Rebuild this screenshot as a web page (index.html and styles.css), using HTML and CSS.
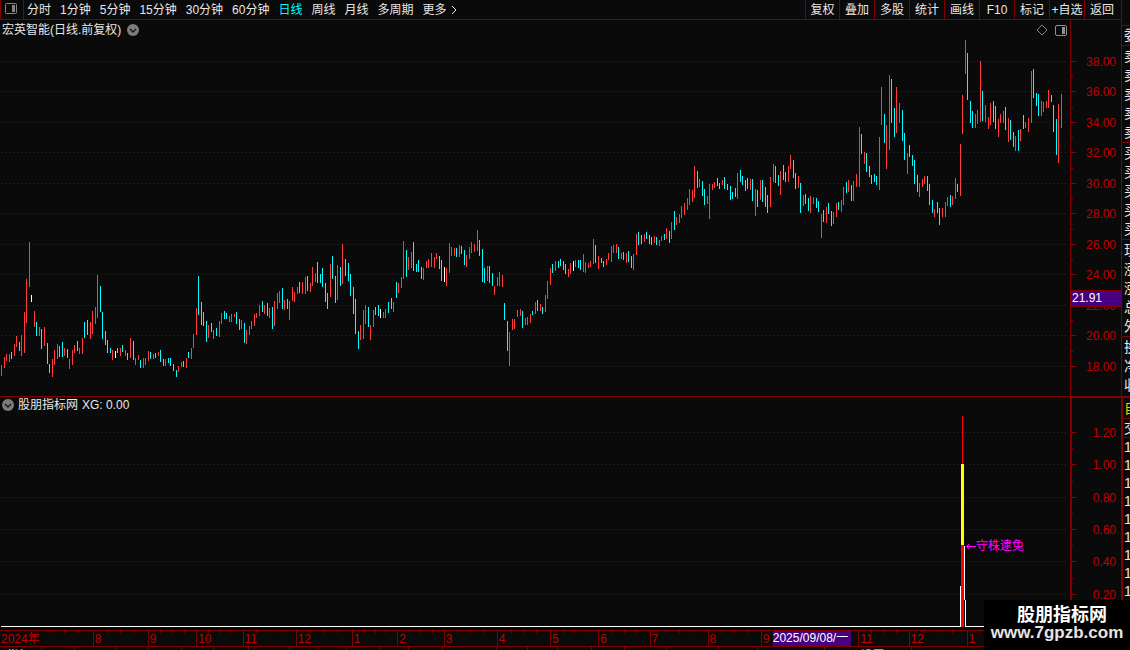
FILE: index.html
```
<!DOCTYPE html>
<html lang="zh-CN">
<head>
<meta charset="utf-8">
<title>宏英智能 日线</title>
<link rel="stylesheet" href="styles.css">
</head>
<body>
<div class="app">
  <div class="main">
    <header class="toolbar">
      <button class="layout-btn" aria-label="布局">
        <svg width="13" height="12" viewBox="0 0 13 12"><rect x=".5" y=".5" width="11" height="10" rx="1" fill="none" stroke="#858585"/><rect x="7" y="2" width="3" height="7" fill="#858585"/></svg>
      </button>
      <nav class="periods">
        <button>分时</button><button>1分钟</button><button>5分钟</button><button>15分钟</button><button>30分钟</button><button>60分钟</button><button class="active">日线</button><button>周线</button><button>月线</button><button>多周期</button><button class="more">更多<svg width="6" height="10" viewBox="0 0 6 10"><path d="M1 1L5 5L1 9" fill="none" stroke="#e8e8e8"/></svg></button>
      </nav>
      <nav class="tools">
        <button>复权</button><button>叠加</button><button>多股</button><button>统计</button><button>画线</button><button>F10</button><button>标记</button><button>+自选</button><button>返回</button>
      </nav>
    </header>

    <section class="panel price">
      <div class="plot">
        <div class="caption">
          <h1>宏英智能(日线.前复权)</h1>
          <svg class="round" width="12" height="12" viewBox="0 0 12 12"><circle cx="6" cy="6" r="6" fill="#7c7c7c"/><path d="M3 5L6 8L9 5" fill="none" stroke="#151515" stroke-width="1.4"/></svg>
        </div>
        <div class="corner">
          <svg width="12" height="12" viewBox="0 0 12 12"><path d="M6 1L11 6L6 11L1 6Z" fill="none" stroke="#808080"/></svg>
          <svg width="12" height="11" viewBox="0 0 12 11"><rect x=".5" y=".5" width="11" height="10" rx="1.5" fill="none" stroke="#909090"/><rect x="7" y="2" width="3" height="7" fill="#909090"/></svg>
        </div>
        <svg class="canvas price-canvas" viewBox="0 20 1070 376" preserveAspectRatio="none">
          <path class="grid" d="M1 61.5H1069M1 91.5H1069M1 122.5H1069M1 152.5H1069M1 183.5H1069M1 213.5H1069M1 244.5H1069M1 274.5H1069M1 305.5H1069M1 335.5H1069M1 366.5H1069"/>
          <path id="up" class="up"/>
          <path id="down" class="down"/>
          <path id="flat" class="flat"/>
        </svg>
      </div>
      <div class="axis">
        <svg width="50" height="376" viewBox="0 20 50 376">
          <path class="ticks" d="M0 61.5H5M0 91.5H5M0 122.5H5M0 152.5H5M0 183.5H5M0 213.5H5M0 244.5H5M0 274.5H5M0 305.5H5M0 335.5H5M0 366.5H5M0 76.5H2M0 107.5H2M0 137.5H2M0 168.5H2M0 198.5H2M0 229.5H2M0 259.5H2M0 290.5H2M0 320.5H2M0 351.5H2"/>
          <g class="labels"><text x="45" y="66">38.00</text><text x="45" y="96">36.00</text><text x="45" y="127">34.00</text><text x="45" y="157">32.00</text><text x="45" y="188">30.00</text><text x="45" y="218">28.00</text><text x="45" y="249">26.00</text><text x="45" y="279">24.00</text><text x="45" y="310">22.00</text><text x="45" y="340">20.00</text><text x="45" y="371">18.00</text></g>
        </svg>
        <output class="price-tag">21.91</output>
      </div>
    </section>

    <section class="panel indicator">
      <div class="plot">
        <div class="caption">
          <svg class="round" width="12" height="12" viewBox="0 0 12 12"><circle cx="6" cy="6" r="6" fill="#7c7c7c"/><path d="M3 5L6 8L9 5" fill="none" stroke="#151515" stroke-width="1.4"/></svg>
          <h2>股朋指标网</h2><span>XG: 0.00</span>
        </div>
        <svg class="canvas indicator-canvas" viewBox="0 397 1070 233" preserveAspectRatio="none">
          <path class="grid" d="M1 432.5H1069M1 464.5H1069M1 497.5H1069M1 529.5H1069M1 561.5H1069M1 594.5H1069"/>
          <path class="signal" d="M1 626.5H960.5V586M964.5 546V600M965.5 600V626.5H1069"/>
          <path fill="#f00" d="M962 416h1v48h-1zM961 545h3v82h-3z"/>
          <path fill="#ff0" d="M961 464h3v81h-3z"/>
          <path d="M966.5 546.5H976M969 544L966.5 546.5L969 549" fill="none" stroke="#f0f"/>
          <text class="note" x="976" y="550">守株逮兔</text>
        </svg>
      </div>
      <div class="axis">
        <svg width="49" height="233" viewBox="0 397 49 233">
          <path class="ticks" d="M0 432.5H4M0 464.5H4M0 497.5H4M0 529.5H4M0 561.5H4M0 594.5H4M0 448.5H1M0 481.5H1M0 513.5H1M0 545.5H1M0 578.5H1"/>
          <g class="labels"><text x="44" y="437">1.20</text><text x="44" y="469">1.00</text><text x="44" y="502">0.80</text><text x="44" y="534">0.60</text><text x="44" y="566">0.40</text><text x="44" y="599">0.20</text></g>
        </svg>
      </div>
    </section>

    <div class="timeline">
      <ol class="months">
        <li class="first" style="flex-grow:37">2024年</li><li class="plain" style="flex-grow:57"></li><li style="flex-grow:55">8</li><li style="flex-grow:48">9</li><li style="flex-grow:46">10</li><li style="flex-grow:53">11</li><li style="flex-grow:56">12</li><li style="flex-grow:45">1</li><li style="flex-grow:46">2</li><li style="flex-grow:53">3</li><li style="flex-grow:53">4</li><li style="flex-grow:48">5</li><li style="flex-grow:51">6</li><li style="flex-grow:58">7</li><li style="flex-grow:53">8</li><li class="cursor-month" style="flex-grow:99">9<span class="date-tag">2025/09/08/一</span></li><li style="flex-grow:50">11</li><li style="flex-grow:58">12</li><li style="flex-grow:52">1</li><li class="plain" style="flex-grow:52"></li>
      </ol>
    </div>

    <footer class="tabs">
      <span style="flex-grow:42">指标</span><span style="flex-grow:31"></span><span style="flex-grow:42"></span><span style="flex-grow:29"></span><span style="flex-grow:33"></span><span style="flex-grow:30"></span><span style="flex-grow:34"></span><span style="flex-grow:41"></span><span style="flex-grow:26"></span><span style="flex-grow:24"></span><span style="flex-grow:32"></span><span style="flex-grow:26"></span><span style="flex-grow:32"></span><span style="flex-grow:58"></span><span style="flex-grow:28"></span><span style="flex-grow:28"></span><span style="flex-grow:32"></span><span style="flex-grow:31"></span><span style="flex-grow:42"></span><span style="flex-grow:55"></span><span style="flex-grow:39"></span><span style="flex-grow:73"></span><span class="picked" style="flex-grow:63">设置</span><span style="flex-grow:250"></span>
    </footer>
  </div>

  <aside class="quote">
    <div class="gap"></div>
    <ul class="one"><li>委</li></ul>
    <ul class="five"><li>卖</li><li>卖</li><li>卖</li><li>卖</li><li>卖</li></ul>
    <ul class="five"><li>买</li><li>买</li><li>买</li><li>买</li><li>买</li></ul>
    <ul class="five"><li>现</li><li>涨</li><li>涨</li><li>总</li><li>外</li></ul>
    <ul class="three"><li>换</li><li>净</li><li>收</li></ul>
    <ul class="own"><li>自</li></ul>
    <ul class="deal"><li>交</li></ul>
    <ul class="trades"><li>1</li><li>1</li><li>1</li><li>1</li><li>1</li><li>1</li><li>1</li><li>1</li><li>1</li></ul>
  </aside>
</div>

<div class="brand"><strong>股朋指标网</strong><span>www.7gpzb.com</span></div>
<script src="chart.js"></script>
</body>
</html>
```
FILE: styles.css
```
* { box-sizing: border-box; }
body, h1, h2, ol, ul { margin: 0; padding: 0; }
body {
  background: #0a0a0a;
  color: #e8e8e8;
  font: 12px/16px "Liberation Sans", "Noto Sans CJK SC", sans-serif;
  overflow: hidden;
}
ol, ul { list-style: none; }
svg { display: block; }
button { background: none; border: 0; padding: 0; margin: 0; color: inherit; font: inherit; white-space: nowrap; }

.app { display: flex; height: 100vh; overflow: hidden; }
.main { flex: 1; min-width: 0; display: flex; flex-direction: column; }

.toolbar { display: flex; flex: none; height: 20px; border-bottom: 1px solid #800000; border-left: 1px solid #800000; }
.layout-btn { width: 23px; padding: 3px 0 0 4px; border-right: 1px solid #800000; }
.layout-btn svg { margin-bottom: 4px; }
.periods { display: flex; gap: 9px; padding-left: 3px; flex: 1; }
.periods .active { color: #00ffff; }
.more { display: flex; align-items: center; gap: 4px; }
.tools { display: flex; }
.tools button { width: 35px; border-left: 1px solid #800000; }
.tools button:first-child { width: 34px; }
.tools button:last-child { width: 37px; padding-right: 7px; text-align: right; }

.panel { display: flex; flex: none; }
.plot { position: relative; flex: 1; min-width: 0; }
.canvas { width: 100%; }
.price-canvas { height: 376px; }
.indicator-canvas { height: 233px; }
.caption { position: absolute; top: 2px; left: 2px; display: flex; align-items: center; gap: 5px; }
.caption h1, .caption h2 { font-size: 12px; font-weight: 400; line-height: 16px; }
.caption h1 { padding-right: 1px; }
.indicator .caption { top: 0; gap: 4px; }
.corner { position: absolute; top: 4px; right: 3px; display: flex; align-items: center; gap: 7px; }

.price { border-bottom: 1px solid #800000; }
.axis { position: relative; flex: none; width: 51px; border-left: 1px solid #800000; }
.indicator .axis { border-left-width: 2px; border-top: 1px solid #800000; }
.indicator { height: 233px; overflow: hidden; }
.indicator .axis svg { margin-top: -1px; }
.price-tag { position: absolute; top: 270px; left: 0; right: 0; height: 17px; padding-left: 1px; line-height: 15px; background: #480080; border: solid #800000; border-width: 1px 0; color: #fff; }

.grid { stroke: #780808; stroke-dasharray: 1 3; fill: none; shape-rendering: crispEdges; }
.ticks { stroke: #900000; shape-rendering: crispEdges; }
.up, .down, .flat, .signal { fill: none; shape-rendering: crispEdges; }
.up { stroke: #ff3c3c; }
.down { stroke: #00ffff; }
.flat, .signal { stroke: #fff; }
.labels { fill: #c00000; text-anchor: end; }
.note { fill: #f0f; }

.timeline { flex: none; border-top: 1px solid #800000; padding-right: 51px; }
.months { display: flex; height: 15px; line-height: 16px; color: #c00000; }
.months li {
  flex: 1 1 0;
  min-width: 0;
  white-space: nowrap;
  padding-left: 1px;
  border-left: 1px solid #800000;
  background:
    linear-gradient(#800000, #800000) 25% 0 / 1px 2px no-repeat,
    linear-gradient(#800000, #800000) 50% 0 / 1px 2px no-repeat,
    linear-gradient(#800000, #800000) 75% 0 / 1px 2px no-repeat;
}
.months .first { background: none; border-left: 0; }
.months .plain { border-left: 0; }
.months .cursor-month { position: relative; background: none; }
.date-tag { position: absolute; top: 0; left: 11px; width: 78px; height: 15px; line-height: 15px; background: #480080; color: #fff; }

.tabs { display: flex; flex: none; height: 20px; border-top: 1px solid #800000; line-height: 18px; }
.tabs span { flex: 1 1 0; min-width: 0; padding-left: 7px; border-right: 1px solid #800000; }
.tabs .picked { color: #00ffff; padding-left: 36px; }

.quote { flex: none; width: 9px; overflow: hidden; border-left: 1px solid #800000; font-size: 14px; }
.quote li { padding-left: 2px; line-height: 19px; white-space: nowrap; }
.quote ul { border-bottom: 1px solid #800000; }
.gap { height: 26px; border-bottom: 1px solid #800000; }
.one { height: 20px; }
.five { display: grid; grid-auto-rows: 1fr; height: 97px; padding-top: 1px; }
.three { height: 60px; padding-top: 1px; }
.quote .own { height: 22px; padding-top: 1px; color: #d8d800; border-top: 1px solid #800000; }
.deal { height: 19px; }
.quote .trades { border: 0; }
.trades li { line-height: 18px; }
.own, .deal, .trades { box-shadow: inset 1px 0 #800000; }

.brand { position: fixed; right: 0; bottom: 0; width: 146px; height: 50px; background: #000; display: flex; flex-direction: column; align-items: center; color: #fff; padding: 3px 0 0 10px; }
.brand strong { font: 700 18px/20px "Noto Sans CJK SC", sans-serif; }
.brand span { font: 700 17px/20px "Liberation Sans", sans-serif; color: #e8e4e4; margin-left: -10px; }
```
FILE: chart.js
```
// Each bar: direction (r up, c down, w unchanged), x, high y, low y.
const bars = `
r 1 365 376,r 4 357 368,r 6 354 361,r 9 354 362,c 11 352 359,r 14 344 356,r 16 336 347,c 19 342 351,r 21 335 356,r 24 312 353,
r 26 279 323,r 29 242 287,w 31 295 302,r 34 311 327,c 36 322 336,r 39 327 336,c 41 329 349,r 44 327 346,c 47 343 364,c 49 364 373,
r 52 359 377,r 54 350 365,r 57 344 359,c 59 346 357,c 62 342 357,r 64 348 356,c 67 349 358,r 69 359 369,r 72 350 365,r 74 345 353,
c 77 341 351,r 79 348 354,r 82 338 354,c 84 322 338,c 87 320 335,r 90 322 339,r 92 311 334,r 95 307 324,r 97 275 318,c 100 286 312,
c 102 312 339,c 105 331 345,c 107 340 353,c 110 348 353,r 112 350 360,w 115 351 358,c 117 348 353,r 120 348 356,c 122 345 352,r 125 350 356,
c 127 353 360,r 130 338 358,c 133 341 360,r 135 358 365,r 138 355 360,c 140 360 368,r 143 358 368,r 145 358 365,r 148 351 361,c 150 352 359,
r 153 354 359,c 155 353 358,r 158 352 356,c 160 350 362,c 163 359 366,r 165 359 366,c 168 358 363,c 170 358 366,c 173 364 371,c 176 370 377,
r 178 366 372,r 181 362 367,c 183 361 367,r 186 358 368,c 188 352 358,r 191 348 359,r 193 334 348,r 196 308 335,c 198 276 315,c 201 302 325,
c 203 312 326,c 206 321 342,r 208 325 338,c 211 323 332,r 213 330 339,c 216 328 336,r 219 321 337,r 221 313 324,c 224 311 319,c 226 313 319,
r 229 316 322,r 231 314 322,r 234 314 317,c 236 312 324,c 239 319 330,r 241 320 329,c 244 323 343,r 246 330 344,r 249 326 335,r 251 321 329,
r 254 314 326,r 256 313 318,r 259 305 316,c 262 301 312,r 264 305 314,c 267 303 316,r 269 308 318,c 272 307 329,r 274 301 326,r 277 293 309,
r 279 291 303,c 282 288 309,r 284 300 310,c 287 299 309,r 289 301 320,r 292 287 301,r 294 292 302,r 297 287 294,c 299 282 293,r 302 282 294,
r 305 277 294,c 307 276 291,r 310 283 292,r 312 267 286,r 315 273 282,c 317 262 283,c 320 274 283,c 322 268 287,c 325 283 302,c 327 293 309,
r 330 264 297,c 332 256 279,c 335 276 303,r 337 265 300,c 340 267 286,r 342 244 284,c 345 259 276,c 348 263 281,c 350 274 296,c 353 287 314,
c 355 299 334,c 358 331 349,r 360 325 340,r 363 310 339,r 365 305 324,c 368 307 327,r 370 325 340,r 373 310 327,c 375 307 315,c 378 305 316,
w 380 309 318,r 383 312 318,r 385 309 318,c 388 302 313,c 391 298 309,r 393 302 312,c 396 282 298,r 398 283 293,r 401 277 288,r 403 241 279,
c 406 250 277,r 408 257 270,r 411 252 268,c 413 242 271,c 416 264 272,c 418 260 272,c 421 267 279,r 423 268 280,r 426 261 268,r 428 259 268,
r 431 253 267,r 434 257 268,r 436 253 259,c 439 256 269,c 441 260 281,w 444 267 282,r 446 268 286,r 449 243 273,r 451 247 256,r 454 248 256,
c 456 248 257,r 459 245 257,c 461 246 254,c 464 250 265,r 466 255 267,r 469 247 259,r 471 242 253,r 474 244 252,r 477 230 251,c 479 240 256,
c 482 249 282,c 484 268 283,r 487 266 281,c 489 266 283,c 492 273 286,r 494 286 295,r 497 277 286,r 499 272 286,r 502 275 287,c 504 303 320,
c 507 321 351,r 509 332 366,r 512 319 330,r 514 319 329,r 517 310 317,r 520 309 316,c 522 311 328,r 525 318 325,r 527 317 325,r 530 314 323,
c 532 311 315,r 535 302 314,c 537 300 311,r 540 304 311,c 542 307 314,r 545 295 312,r 547 281 299,r 550 268 285,c 552 264 273,r 555 261 271,
c 558 261 268,c 560 259 266,c 563 261 270,c 565 264 274,r 568 269 277,r 570 263 274,w 573 261 271,r 575 260 267,c 578 260 268,c 580 260 270,
r 583 254 272,r 585 262 273,r 588 263 268,r 590 261 267,r 593 239 264,c 595 245 263,r 598 256 269,c 601 258 263,c 603 261 267,r 606 259 265,
r 608 253 260,r 611 246 262,r 613 245 253,r 616 244 253,c 618 247 259,r 621 253 259,c 623 252 260,r 626 253 263,c 628 251 262,c 631 256 268,
r 633 254 270,r 636 234 255,c 638 232 245,c 641 235 244,r 644 234 242,c 646 232 239,c 649 235 244,c 651 237 245,r 654 236 243,c 656 237 245,
r 659 240 246,r 661 236 241,c 664 234 240,r 666 228 239,c 669 231 243,r 671 222 239,c 674 211 230,r 676 217 225,r 679 214 223,r 681 206 218,
r 684 203 215,r 687 198 210,r 689 189 205,r 692 190 202,r 694 166 198,c 697 171 188,r 699 179 187,c 702 181 196,c 704 189 205,r 707 196 204,
r 709 184 219,r 712 184 190,r 714 182 188,c 717 178 186,c 719 183 189,r 722 180 185,c 724 177 189,c 727 184 190,c 730 186 200,c 732 192 199,
c 735 188 197,r 737 173 199,c 740 170 182,c 742 176 185,c 745 180 191,c 747 178 189,r 750 179 190,c 752 179 201,r 755 189 216,c 757 190 207,
r 760 180 200,c 762 180 202,c 765 187 207,c 767 195 213,r 770 177 207,r 773 164 182,c 775 166 183,c 778 175 186,r 780 171 195,c 783 165 180,
c 785 172 182,r 788 166 182,r 790 155 169,c 793 160 178,c 795 173 189,r 798 176 188,c 800 183 213,r 803 195 206,c 805 194 204,c 808 198 211,
r 810 196 213,r 813 197 204,c 816 198 208,c 818 201 212,r 821 214 238,c 823 210 222,r 826 207 223,c 828 203 214,c 831 211 226,r 833 212 224,
r 836 203 217,c 838 202 210,r 841 200 212,r 843 187 205,c 846 182 193,r 848 180 192,c 851 185 201,r 853 181 201,r 856 174 187,r 859 127 187,
c 861 134 154,r 864 152 164,c 866 153 172,c 869 166 177,c 871 175 184,c 874 174 182,c 876 176 185,r 879 137 190,r 881 87 125,c 884 114 143,
r 886 125 169,r 889 75 150,c 891 79 123,c 894 108 137,r 896 87 133,r 899 103 123,c 902 110 141,c 904 133 160,r 907 153 174,c 909 145 157,
c 912 155 166,c 914 160 184,c 917 175 192,r 919 183 197,r 922 179 187,r 924 176 184,c 927 176 191,c 929 184 205,c 932 200 213,r 934 209 217,
c 937 202 213,c 939 208 225,r 942 208 217,r 945 202 217,r 947 197 206,c 950 195 207,r 952 196 205,r 955 178 199,c 957 184 192,r 960 144 196,
r 962 95 134,r 965 40 74,c 967 53 100,c 970 101 123,c 972 111 128,r 975 114 128,r 977 110 124,r 980 61 122,c 982 91 121,r 985 105 122,
r 988 117 129,r 990 103 125,c 993 101 122,c 995 106 129,r 998 119 137,r 1000 114 123,r 1003 111 123,c 1005 107 130,r 1008 118 142,c 1010 120 140,
c 1013 132 147,r 1015 136 151,c 1018 130 151,r 1020 129 141,c 1023 115 129,r 1025 122 128,r 1028 118 132,r 1031 71 123,c 1033 69 98,c 1036 93 106,
c 1038 94 116,r 1041 101 116,r 1043 102 112,r 1046 101 108,r 1048 90 108,c 1051 95 102,c 1053 105 132,c 1056 119 155,r 1058 104 163,r 1061 94 128`;

const paths = { r: '', c: '', w: '' };
for (const bar of bars.trim().split(/,\s*/)) {
  const [kind, x, high, low] = bar.split(' ');
  paths[kind] += `M${+x + 0.5} ${high}V${low}`;
}
document.getElementById('up').setAttribute('d', paths.r);
document.getElementById('down').setAttribute('d', paths.c);
document.getElementById('flat').setAttribute('d', paths.w);
```
